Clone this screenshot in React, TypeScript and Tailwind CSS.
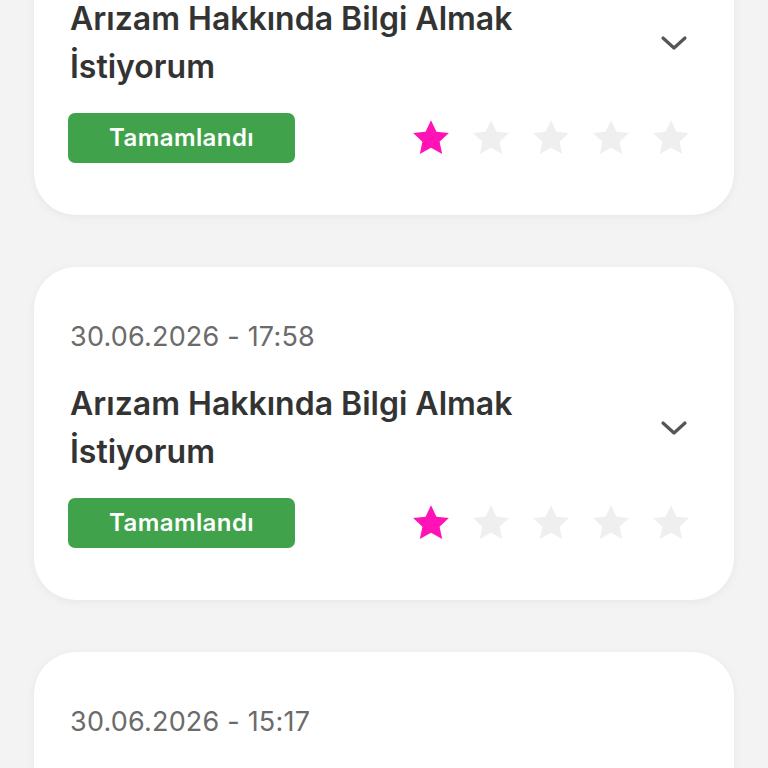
import React from "react";

function Star({ filled }: { filled: boolean }) {
  return (
    <svg width="42" height="42" viewBox="0 0 24 24" className="block">
      <path
        d="M12 1.8l3.1 6.6 7.1.8-5.3 4.9 1.5 7.1L12 17.6l-6.4 3.6 1.5-7.1-5.3-4.9 7.1-.8z"
        fill={filled ? "#ff12b6" : "#efefef"}
      />
    </svg>
  );
}

function Chevron() {
  return (
    <svg width="28" height="18" viewBox="0 0 28 18" className="block">
      <path d="M3 4l11 10 11-10" fill="none" stroke="#555555" strokeWidth="3.2" strokeLinecap="round" strokeLinejoin="round" />
    </svg>
  );
}

function Card({ date }: { date: string }) {
  return (
    <div className="bg-white rounded-[42px] shadow-[0_2px_10px_rgba(0,0,0,0.05)] pt-[46px] pb-[52px] pl-[34px] pr-[44px]">
      <div className="pl-[2px] text-[27px] leading-[48px] text-[#6b6b6b] tracking-[0.2px]">{date}</div>
      <div className="mt-[19px] flex items-center justify-between pl-[2px]">
        <div className="w-[500px] text-[32px] leading-[48px] font-semibold text-[#333333]">
          Arızam Hakkında Bilgi Almak İstiyorum
        </div>
        <div className="mr-[2px]">
          <Chevron />
        </div>
      </div>
      <div className="mt-[22px] flex items-center justify-between">
        <div className="w-[227px] h-[50px] rounded-[7px] bg-[#40a34b] flex items-center justify-center text-white text-[24px] tracking-[0.4px] font-semibold">
          Tamamlandı
        </div>
        <div className="flex items-center gap-[18px] mr-[-2px]">
          <Star filled />
          <Star filled={false} />
          <Star filled={false} />
          <Star filled={false} />
          <Star filled={false} />
        </div>
      </div>
    </div>
  );
}

export default function App() {
  return (
    <div
      className="w-[768px] h-[768px] overflow-hidden bg-[#f3f3f3]"
      style={{ fontFamily: "Inter, 'Noto Sans', sans-serif" }}
    >
      <div className="px-[34px] flex flex-col gap-[52px] mt-[-118px]">
        <Card date="30.06.2026 - 18:12" />
        <Card date="30.06.2026 - 17:58" />
        <Card date="30.06.2026 - 15:17" />
      </div>
    </div>
  );
}
